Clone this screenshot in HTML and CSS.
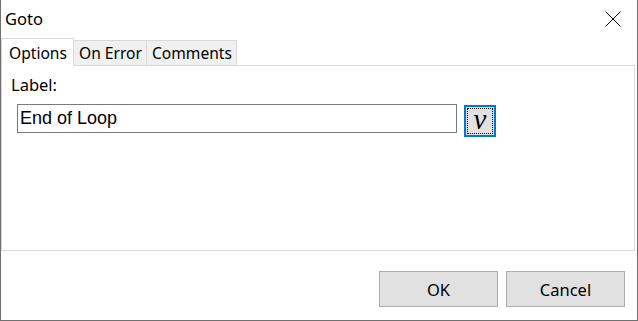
FILE: index.html
```html
<!DOCTYPE html>
<html lang="en">
<head>
    <meta charset="UTF-8">
    <title>Goto</title>
    <link rel="stylesheet" href="styles.css">
</head>
<body>
    <div class="dialog">
        <div class="titlebar">
            <span class="title">Goto</span>
            <svg class="close" width="16" height="16" viewBox="0 0 16 16">
                <path d="M0.5 0.5 L15.5 15.5 M15.5 0.5 L0.5 15.5" stroke="#000" stroke-width="1" fill="none"/>
            </svg>
        </div>

        <div class="tabs">
            <div class="tab active">Options</div>
            <div class="tab">On Error</div>
            <div class="tab">Comments</div>
        </div>

        <div class="panel">
            <label class="field-label" for="label">Label:</label>
            <div class="field-row">
                <input type="text" id="label" class="text-input" value="End of Loop">
                <button type="button" class="var-btn"><span class="var-focus">v</span></button>
            </div>
        </div>

        <div class="footer">
            <button type="button" class="btn">OK</button>
            <button type="button" class="btn">Cancel</button>
        </div>
    </div>
</body>
</html>
```

FILE: styles.css
```css
body {
    margin: 0;
    padding: 0;
    background-color: #ffffff;
    font-family: "Noto Sans", "Open Sans", sans-serif;
    color: #000;
}

.dialog {
    width: 638px;
    height: 321px;
    box-sizing: border-box;
    border: 1px solid #6f6f6f;
    border-top: none;
    background-color: #ffffff;
    display: flex;
    flex-direction: column;
}

.titlebar {
    height: 37px;
    display: flex;
    align-items: flex-start;
    justify-content: space-between;
    padding: 0 16px 0 4px;
}

.title {
    font-size: 16.5px;
    margin-top: 7px;
}

.close {
    margin-top: 11px;
}

.tabs {
    height: 28px;
    display: flex;
    align-items: flex-end;
    position: relative;
    z-index: 1;
}

.tab {
    height: 24px;
    padding: 0 4px 0 5px;
    background-color: #f0f0f0;
    border: 1px solid #d9d9d9;
    border-left: none;
    border-bottom: none;
    font-size: 15.6px;
    line-height: 24px;
    box-sizing: content-box;
}

.tab.active {
    height: 27px;
    padding: 0 6px 0 7px;
    background-color: #ffffff;
    border-left: 1px solid #d9d9d9;
    margin-bottom: -1px;
    line-height: 28px;
}

.panel {
    margin-right: 2px;
    border: 1px solid #d9d9d9;
    padding: 10px 0 0 9px;
    height: 174px;
}

.field-label {
    display: block;
    font-size: 16.5px;
    line-height: 18px;
}

.field-row {
    display: flex;
    align-items: flex-start;
    margin-top: 10px;
    padding-left: 6px;
}

.text-input {
    width: 440px;
    height: 29px;
    box-sizing: border-box;
    border: 1px solid #7a7a7a;
    padding: 0 2px;
    font-family: "Liberation Sans", Arial, sans-serif;
    font-size: 18px;
    outline: none;
}

.var-btn {
    width: 32px;
    height: 32px;
    margin-left: 7px;
    margin-top: 1px;
    padding: 1px;
    border: 2px solid #0078d7;
    background-color: #e1e1e1;
    box-sizing: border-box;
}

.var-focus {
    display: block;
    height: 100%;
    border: 1px dotted #000;
    box-sizing: border-box;
    font-family: "Liberation Serif", serif;
    font-style: italic;
    font-size: 29px;
    line-height: 20px;
    text-align: center;
}

.footer {
    flex: 1;
    display: flex;
    justify-content: flex-end;
    align-items: flex-start;
    gap: 8px;
    padding: 20px 12px 0 0;
}

.btn {
    width: 119px;
    height: 36px;
    border: 1px solid #adadad;
    background-color: #e1e1e1;
    font-family: "Noto Sans", "Open Sans", sans-serif;
    font-size: 16.5px;
    color: #000;
}
```
